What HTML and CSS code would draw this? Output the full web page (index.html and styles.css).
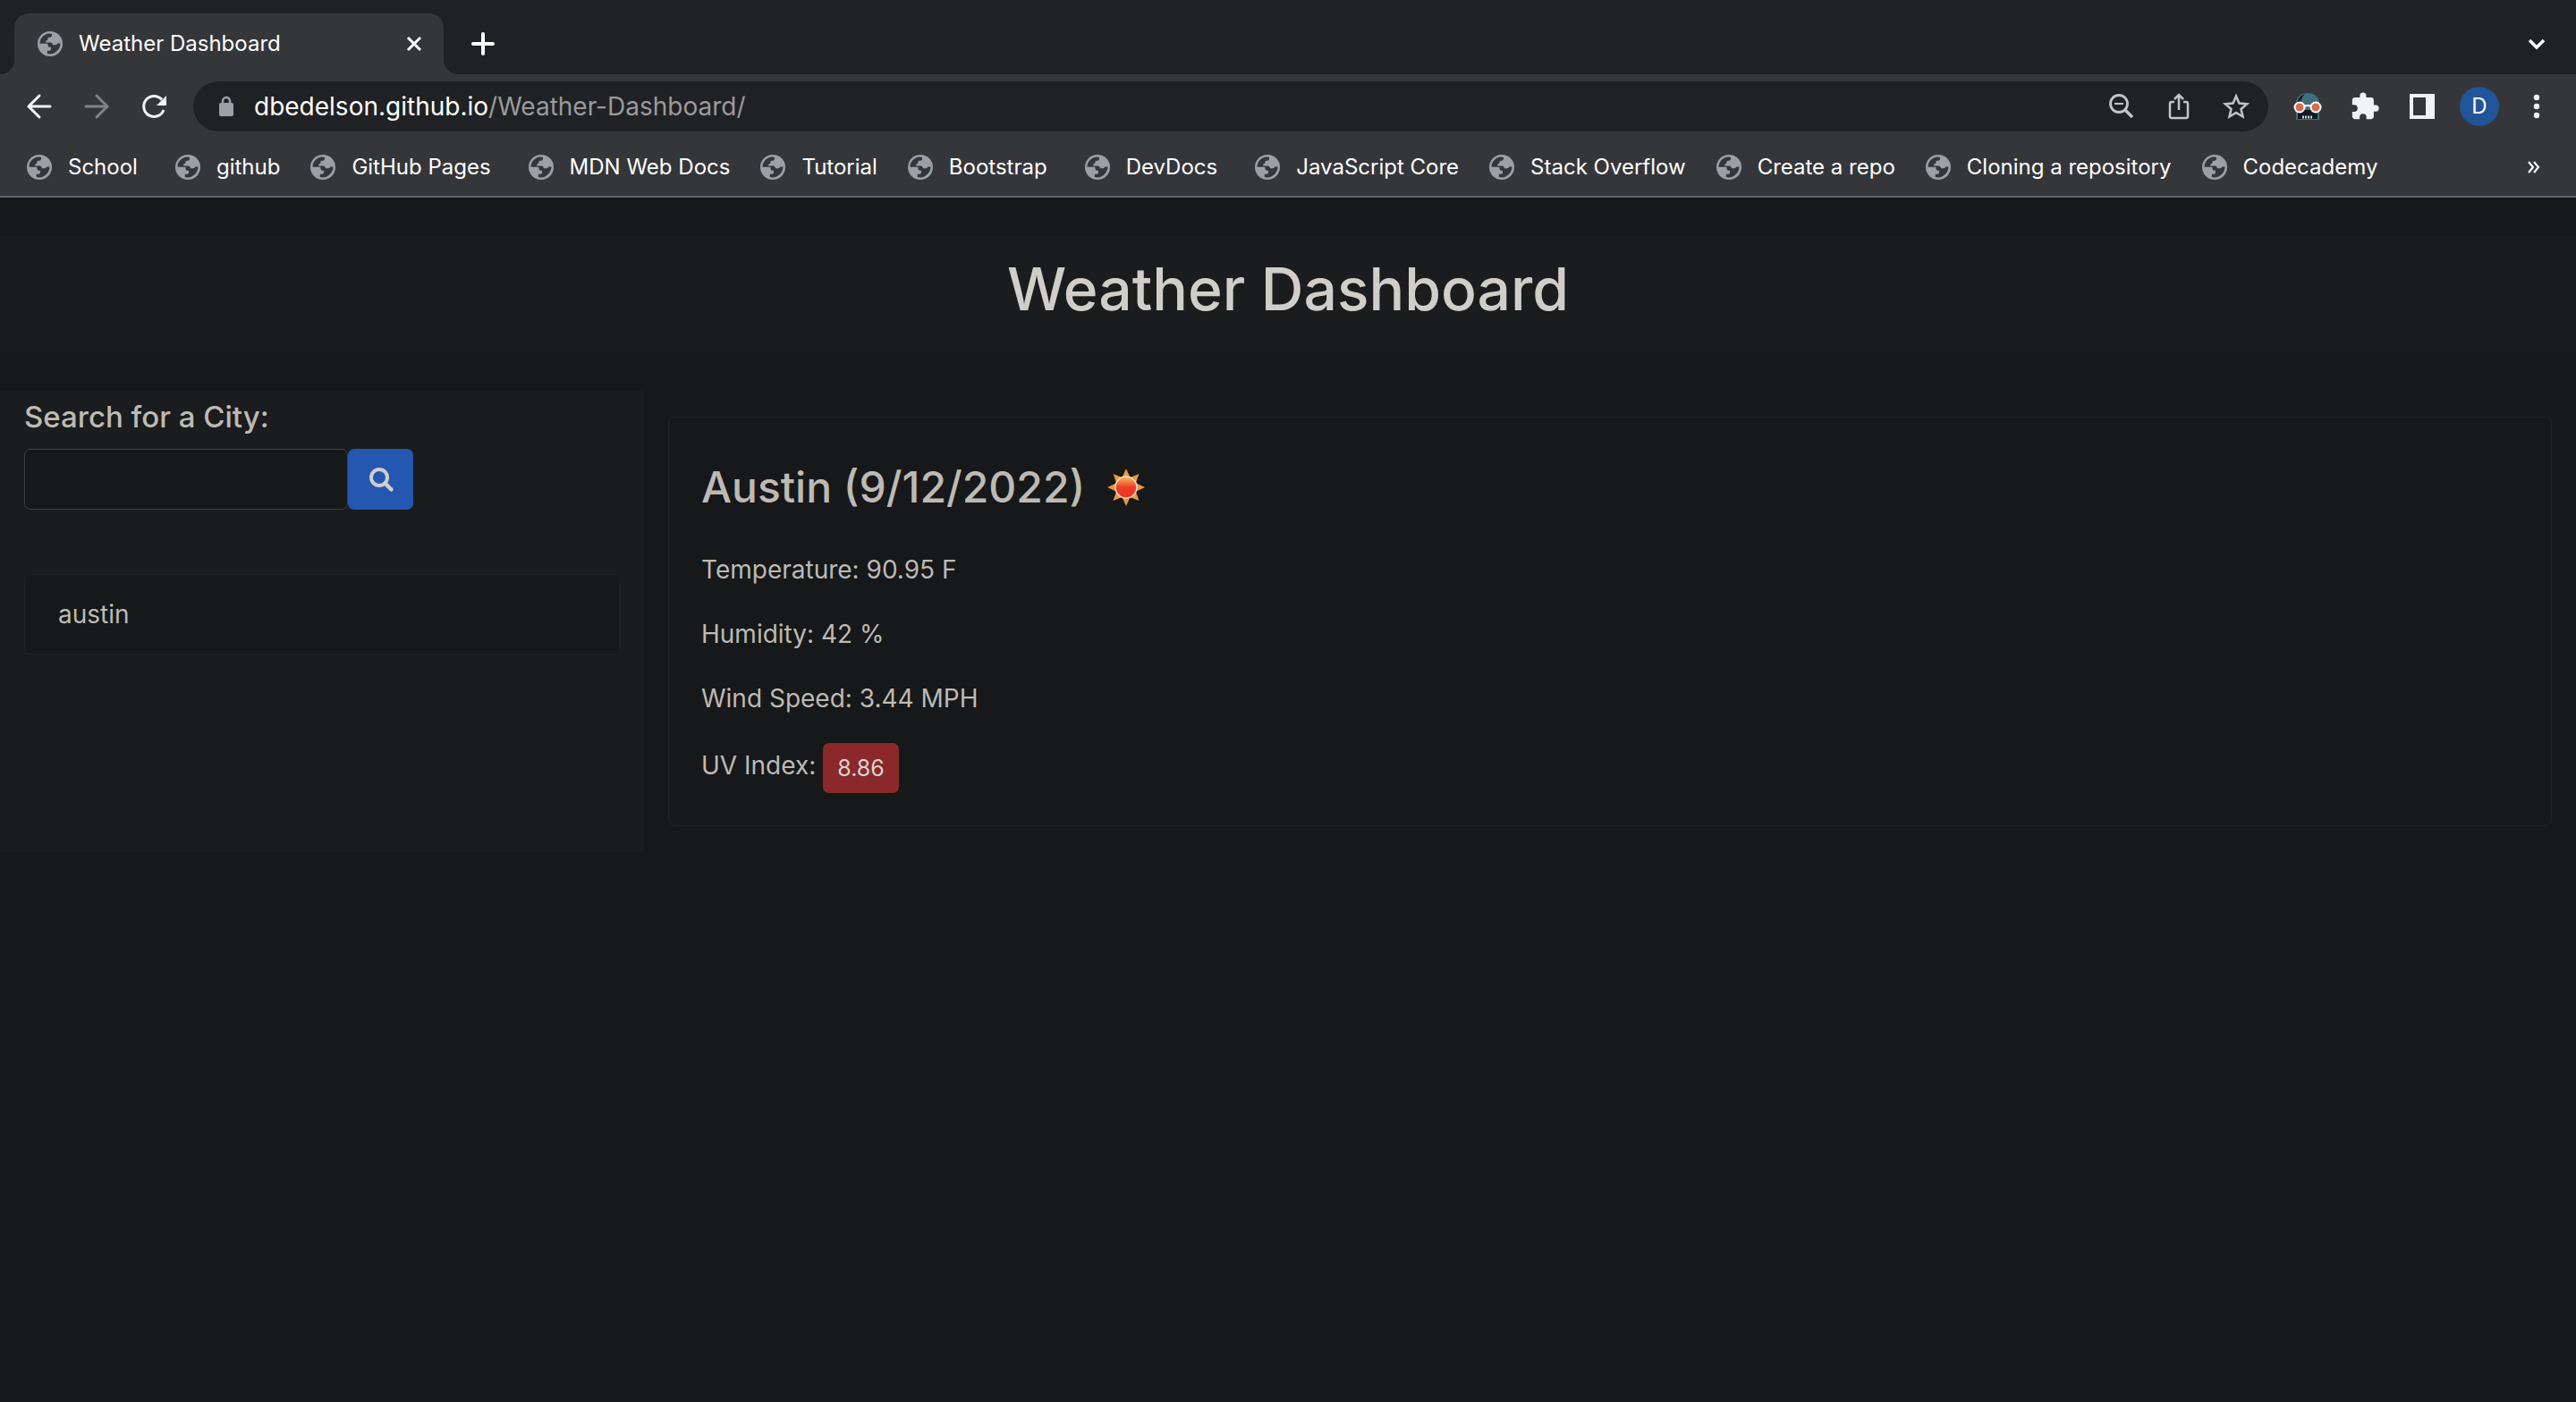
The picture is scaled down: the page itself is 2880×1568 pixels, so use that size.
FILE: index.html
```html
<!DOCTYPE html>
<html lang="en">
<head>
<meta charset="utf-8">
<title>Weather Dashboard</title>
<link rel="stylesheet" href="styles.css">
</head>
<body>
<svg class="defs" aria-hidden="true">
  <symbol id="globe" viewBox="0 0 28 28">
    <circle cx="14" cy="14" r="14" fill="#9aa0a6"/>
    <path fill="#35363a" d="M2.500 13.800C2.500 8 7 3 13.500 2.600L16 2.900v1.500c0 1.600-1.200 2.400-3 2.400-1.400 0-1.600.8-1.600 2s-1 1.500-2 1.600l-.3 2.200h5c1.800 0 2.600 1 2.800 2.600h3c1.200 0 2-.4 2.300-1.600h3.300C25.500 20 20 25.500 14 25.500q-1.800 0-3.200-.4v-3.300h2.500q1.700-.2 1.700-2v-2h-1.700q-1.600 0-1.800-2l-.2-2z"/>
  </symbol>
</svg>

<header class="browser">
  <div class="tabstrip">
    <div class="tab">
      <svg class="globe"><use href="#globe"/></svg>
      <span class="tab-title">Weather Dashboard</span>
      <button class="icon-btn tab-close" aria-label="Close tab"><svg width="18" height="18" viewBox="0 0 18 18"><path d="M2 2l14 14M16 2L2 16" stroke="#fff" stroke-width="3"/></svg></button>
    </div>
    <button class="icon-btn new-tab" aria-label="New tab"><svg width="26" height="26" viewBox="0 0 26 26"><path d="M13 2v22M2 13h22" stroke="#fff" stroke-width="4" stroke-linecap="round"/></svg></button>
    <button class="icon-btn tab-search" aria-label="Search tabs"><svg width="20" height="14" viewBox="0 0 20 14"><path d="M2 3l8 8 8-8" fill="none" stroke="#fff" stroke-width="3.500"/></svg></button>
  </div>

  <div class="toolbar">
    <div class="nav">
      <button class="icon-btn" aria-label="Back"><svg width="32" height="32" viewBox="0 0 32 32"><path d="M28 16H4M16 4L4 16l12 12" fill="none" stroke="#f1f3f4" stroke-width="3" stroke-linecap="round"/></svg></button>
      <button class="icon-btn" aria-label="Forward"><svg width="32" height="32" viewBox="0 0 32 32"><path d="M4 16h24M16 4l12 12-12 12" fill="none" stroke="#818386" stroke-width="3" stroke-linecap="round"/></svg></button>
      <button class="icon-btn" aria-label="Reload"><svg width="32" height="32" viewBox="0 0 32 32"><path d="M27 20A11.500 11.500 0 1 1 25 8.500" fill="none" stroke="#f1f3f4" stroke-width="3"/><path d="M30 4v11H19z" fill="#f1f3f4"/></svg></button>
    </div>
    <div class="omnibox">
      <svg class="lock" width="18" height="24" viewBox="0 0 18 24"><path d="M5 10V6a4 4 0 0 1 8 0v4" fill="none" stroke="#9aa0a6" stroke-width="2.500"/><rect x="1" y="8" width="16" height="15" rx="2" fill="#9aa0a6"/></svg>
      <p class="url">dbedelson.github.io<span class="path">/Weather-Dashboard/</span></p>
      <button class="icon-btn" aria-label="Zoom"><svg width="32" height="32" viewBox="0 0 32 32"><circle cx="13" cy="13" r="9.500" fill="none" stroke="#c4c5c6" stroke-width="2.800"/><path d="M8 13h10" stroke="#c4c5c6" stroke-width="2"/><path d="M20 20l8 8" stroke="#c4c5c6" stroke-width="3.600"/></svg></button>
      <button class="icon-btn" aria-label="Share"><svg width="32" height="32" viewBox="0 0 32 32"><path d="M11 11H8q-2 0-2 2v14q0 2 2 2h16q2 0 2-2V13q0-2-2-2h-3M16 20V4M11 8l5-5 5 5" fill="none" stroke="#c4c5c6" stroke-width="2.500"/></svg></button>
      <button class="icon-btn" aria-label="Bookmark"><svg width="32" height="32" viewBox="0 0 32 32"><path d="M16 4.500l3.400 8.100 8.700.7-6.600 5.700 2 8.500-7.500-4.500-7.500 4.500 2-8.500-6.600-5.700 8.700-.7z" fill="none" stroke="#c4c5c6" stroke-width="2.500"/></svg></button>
    </div>
    <div class="extensions">
      <button class="icon-btn" aria-label="Skull extension"><svg width="32" height="32" viewBox="0 0 32 32"><path d="M3 31V13C3 5 9 1 16 1s13 4 13 12v18z" fill="#406e7e"/><path d="M4 13Q5 5 13 2 8 7 8 13zM5 20h22v10H5z" fill="#111920"/><circle cx="7" cy="17" r="5.500" fill="#d96b4b" stroke="#fff" stroke-width="2"/><circle cx="25" cy="17" r="5.500" fill="#d96b4b" stroke="#fff" stroke-width="2"/><path d="M12 16q4-2 8 0" fill="none" stroke="#fff" stroke-width="2"/><path d="M10 28h12" stroke="#b5dbe0" stroke-width="3" stroke-dasharray="2 1"/></svg></button>
      <button class="icon-btn" aria-label="Extensions"><svg width="34" height="34" viewBox="0 0 24 24"><path d="M20.500 11H19V7c0-1.100-.9-2-2-2h-4V3.500a2.500 2.500 0 0 0-5 0V5H4c-1.100 0-2 .9-2 2v3.800h1.500a2.700 2.700 0 0 1 0 5.400H2V20c0 1.100.9 2 2 2h3.800v-1.500a2.700 2.700 0 0 1 5.400 0V22H17c1.100 0 2-.9 2-2v-4h1.500a2.500 2.500 0 0 0 0-5z" fill="#f1f3f4"/></svg></button>
      <button class="icon-btn" aria-label="Side panel"><svg width="30" height="30" viewBox="0 0 30 30"><path fill-rule="evenodd" d="M1 1h28v28H1zM5 5v20h14V5z" fill="#f1f3f4"/></svg></button>
      <button class="avatar" aria-label="Profile">D</button>
      <button class="icon-btn" aria-label="Menu"><svg width="8" height="30" viewBox="0 0 8 30"><g fill="#f1f3f4"><circle cx="4" cy="5" r="3.200"/><circle cx="4" cy="15" r="3.200"/><circle cx="4" cy="25" r="3.200"/></g></svg></button>
    </div>
  </div>

  <nav class="bookmarks">
    <a class="roomy" href="#"><svg class="globe"><use href="#globe"/></svg>School</a>
    <a href="#"><svg class="globe"><use href="#globe"/></svg>github</a>
    <a class="roomy" href="#"><svg class="globe"><use href="#globe"/></svg>GitHub Pages</a>
    <a href="#"><svg class="globe"><use href="#globe"/></svg>MDN Web Docs</a>
    <a href="#"><svg class="globe"><use href="#globe"/></svg>Tutorial</a>
    <a class="roomy" href="#"><svg class="globe"><use href="#globe"/></svg>Bootstrap</a>
    <a class="roomy" href="#"><svg class="globe"><use href="#globe"/></svg>DevDocs</a>
    <a href="#"><svg class="globe"><use href="#globe"/></svg>JavaScript Core</a>
    <a href="#"><svg class="globe"><use href="#globe"/></svg>Stack Overflow</a>
    <a href="#"><svg class="globe"><use href="#globe"/></svg>Create a repo</a>
    <a href="#"><svg class="globe"><use href="#globe"/></svg>Cloning a repository</a>
    <a href="#"><svg class="globe"><use href="#globe"/></svg>Codecademy</a>
    <button class="icon-btn more" aria-label="More bookmarks"><svg width="14" height="14" viewBox="0 0 14 14"><path d="M1 1l5 6-5 6M7 1l5 6-5 6" fill="none" stroke="#fff" stroke-width="2.200"/></svg></button>
  </nav>
</header>

<main class="page">
  <h1 class="banner">Weather Dashboard</h1>
  <div class="columns">
    <aside class="sidebar">
      <form class="search">
        <label class="search-label" for="city">Search for a City:</label>
        <div class="search-row">
          <input id="city" class="search-input" type="text">
          <button class="search-btn" type="button" aria-label="Search"><svg width="30" height="30" viewBox="0 0 30 30"><circle cx="13" cy="13" r="9" fill="none" stroke="#d1cec9" stroke-width="4"/><path d="M19.500 19.500l7 7" stroke="#d1cec9" stroke-width="4.500" stroke-linecap="round"/></svg></button>
        </div>
      </form>
      <ul class="history">
        <li>austin</li>
      </ul>
    </aside>
    <section class="card">
      <h2 class="city">Austin (9/12/2022)
        <svg class="sun" width="44" height="44" viewBox="0 0 44 44"><defs><linearGradient id="heat" x1="0" y1="0" x2="0" y2="1"><stop offset="0" stop-color="#f5c25a"/><stop offset=".5" stop-color="#ee3c25"/><stop offset="1" stop-color="#ea3323"/></linearGradient></defs><path d="M22 1l4.500 10 10-4-3.700 10.200L43 22l-10.200 4.800L36.500 37l-10-4L22 43l-4.500-10-10 4 3.700-10.200L1 22l10.200-4.800L7.500 7l10 4z" fill="#e89a3c"/><circle cx="22" cy="22" r="12" fill="url(#heat)" stroke="#f6dcc4" stroke-width="1.500"/></svg>
      </h2>
      <p>Temperature: 90.95 F</p>
      <p>Humidity: 42 %</p>
      <p>Wind Speed: 3.44 MPH</p>
      <p class="uv">UV Index: <span class="uv-badge">8.86</span></p>
    </section>
  </div>
</main>
</body>
</html>
```
FILE: styles.css
```css
* { box-sizing: border-box; }
body {
  margin: 0;
  min-height: 100vh;
  background: #161819;
  color: #bdbab4;
  font: 28px/44px Inter, "Liberation Sans", sans-serif;
}
h1, h2, p, ul { margin: 0; padding: 0; }
h1, h2 { font-weight: 500; }
button { font: inherit; border: 0; padding: 0; color: inherit; }
.defs { position: absolute; width: 0; height: 0; }
.icon-btn { display: flex; align-items: center; justify-content: center; background: none; flex: none; }

/* Browser chrome */
.browser { background: #35363a; border-bottom: 2px solid #5f6368; color: #fff; font-size: 24px; }
.globe { width: 28px; height: 28px; flex: none; }
.tabstrip { display: flex; align-items: flex-end; height: 83px; padding: 0 32px 0 16px; background: #202124; }
.tab {
  position: relative;
  display: flex;
  align-items: center;
  width: 480px;
  height: 68px;
  padding: 0 24px 0 26px;
  background: #35363a;
  border-radius: 16px 16px 0 0;
}
.tab::before, .tab::after { content: ""; position: absolute; bottom: 0; width: 16px; height: 16px; }
.tab::before { left: -16px; background: radial-gradient(circle at 0 0, #202124 16px, #35363a 16px); }
.tab::after { right: -16px; background: radial-gradient(circle at 100% 0, #202124 16px, #35363a 16px); }
.tab-title { margin-left: 18px; margin-right: auto; }
.new-tab { width: 88px; height: 68px; }
.tab-search { height: 68px; width: 24px; margin-left: auto; margin-right: 0; }
.toolbar { display: flex; align-items: center; padding: 8px 22px 8px 28px; }
.nav { display: flex; gap: 32px; margin-right: 28px; }
.omnibox { display: flex; align-items: center; flex: 1; height: 56px; padding: 0 20px 0 28px; gap: 32px; background: #202124; border-radius: 28px; }
.lock { flex: none; }
.url { flex: 1; margin-left: -10px; font-size: 28px; }
.path { color: #9a9b9d; }
.extensions { display: flex; align-items: center; gap: 20px; margin-left: 22px; }
.extensions .icon-btn { width: 44px; }
.avatar { width: 44px; height: 44px; border-radius: 50%; background: #20559a; font-size: 24px; }
.bookmarks { display: flex; align-items: center; height: 64px; padding: 0 40px 0 30px; gap: 34px; }
.bookmarks a { display: flex; align-items: center; gap: 18px; color: #fff; text-decoration: none; white-space: nowrap; }
.bookmarks .roomy { padding-right: 8px; }
.more { margin-left: auto; }

/* Page */
.page { padding-top: 43px; }
.banner { padding: 16px 28px 28px; background: #1a1c1d; color: #d1cec9; font-size: 66px; line-height: 86px; text-align: center; }
.columns { display: grid; grid-template-columns: 1fr 3fr; margin-top: 43px; }
.sidebar { padding: 7px 27px; background: #1a1c1d; }
.search-label { display: block; margin-bottom: 14px; font-size: 33px; font-weight: 500; }
.search-row { display: flex; }
.search-input { width: 362px; height: 68px; padding: 0 20px; background: #161819; border: 1px solid #3c4144; border-radius: 7px; color: inherit; font: inherit; }
.search-btn { display: flex; align-items: center; justify-content: center; width: 73px; height: 68px; background: #2457b0; border-radius: 7px; }
.history { margin-top: 72px; list-style: none; }
.history li { padding: 22px 37px; background: #161819; border: 1px solid #212425; border-radius: 7px; }
.card { margin: 29px 27px; padding: 36px; border: 1px solid #212425; border-radius: 7px; }
.card p { margin-top: 28px; }
.city { display: flex; align-items: center; gap: 24px; padding: 20px 0; font-size: 48px; }
.card .uv { display: flex; align-items: flex-start; gap: 8px; line-height: 50px; }
.uv-badge { padding: 6px 16px; background: #8a282c; border-radius: 7px; color: #d9d3ce; font-size: 25px; line-height: 44px; }
```
